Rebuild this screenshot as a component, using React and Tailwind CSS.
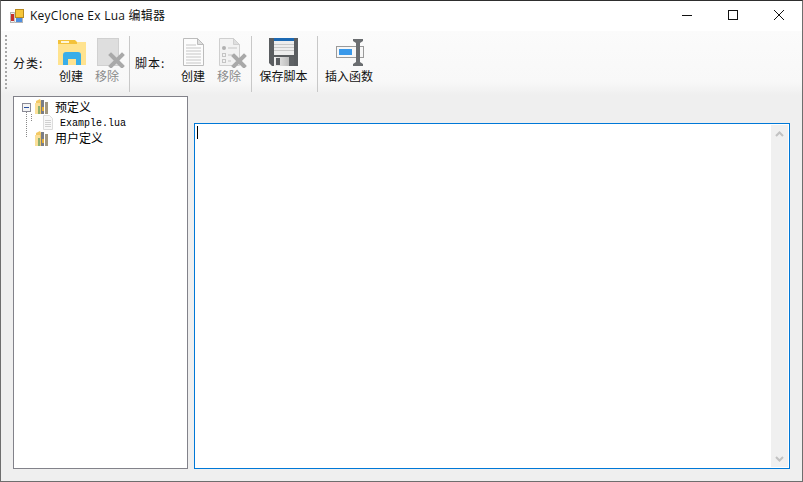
const cjk = "font-['Noto_Sans_CJK_SC','Noto_Sans',sans-serif]";

function AppIcon() {
  return (
    <svg width="14" height="14" viewBox="0 0 14 14">
      <rect x="0.5" y="3.5" width="12" height="10" fill="#f0f0f0" stroke="#b5b5b5" />
      <path d="M4.5 3v11M0 6.5h5" stroke="#c4c4c4" />
      <rect x="1" y="5" width="3" height="7" fill="#c62f2a" />
      <rect x="5.5" y="0.5" width="8" height="8" fill="#f6c63a" stroke="#b98a1e" />
      <rect x="6" y="9" width="6" height="4" fill="#4f8fe0" />
    </svg>
  );
}

function FolderBlue() {
  return (
    <svg width="28" height="25" viewBox="0 0 28 25" className="mt-[2px]">
      <path d="M0 2h28v23H0z" fill="#ffe38f" />
      <path d="M0 0h17l2 2v2H0z" fill="#f3c23a" />
      <rect x="3" y="1" width="8" height="2" fill="#fdf6d8" />
      <path d="M5 25V15q0-3 3-3h12q3 0 3 3v10h-5v-6h-8v6z" fill="#39aee9" />
    </svg>
  );
}

function GreyX({ x = 0, y = 0, size = 15 }) {
  return (
    <path
      transform={`translate(${x} ${y})`}
      d={`M2 2L${size - 2} ${size - 2}M${size - 2} 2L2 ${size - 2}`}
      stroke="#a9a9a9"
      strokeWidth="4"
      strokeLinecap="square"
      fill="none"
    />
  );
}

function RemoveCategory() {
  return (
    <svg width="28" height="30" viewBox="0 0 28 30">
      <rect x="0.5" y="0.5" width="21" height="27" fill="#dedede" stroke="#d0d0d0" />
      <GreyX x="12" y="15" />
    </svg>
  );
}

function DocLines() {
  return (
    <svg width="21" height="28" viewBox="0 0 21 28">
      <path d="M0.5 0.5h14l6 6v21H0.5z" fill="#fcfcfc" stroke="#bcbcbc" />
      <path d="M14.5 0.5v6h6z" fill="#dedede" stroke="#bcbcbc" />
      <path d="M3 7h10M3 10h15M3 13h15M3 16h15M3 19h15M3 22h15M3 25h15" stroke="#c6c6c6" />
    </svg>
  );
}

function DocRemove() {
  return (
    <svg width="28" height="30" viewBox="0 0 28 30">
      <path d="M0.5 0.5h14l6 6v21H0.5z" fill="#f2f2f2" stroke="#cfcfcf" />
      <path d="M14.5 0.5v6h6z" fill="#dedede" stroke="#cfcfcf" />
      <circle cx="5" cy="10" r="2" fill="#b0b0b0" />
      <rect x="3.5" y="15.5" width="3" height="3" fill="none" stroke="#c4c4c4" />
      <rect x="3.5" y="21.5" width="3" height="3" fill="none" stroke="#c4c4c4" />
      <path d="M9 10h9M9 17h6M9 23h3" stroke="#c4c4c4" />
      <GreyX x="13" y="16" size="14" />
    </svg>
  );
}

function Floppy() {
  return (
    <svg width="30" height="28" viewBox="0 0 30 28">
      <defs>
        <linearGradient id="disk" x1="0" x2="1" y1="0" y2="0">
          <stop offset="0" stopColor="#f2f2f2" />
          <stop offset="1" stopColor="#a9a9a9" />
        </linearGradient>
      </defs>
      <path d="M0 0h29v28H3l-3-3z" fill="#5a5d60" />
      <rect x="5" y="0" width="20" height="3" fill="#1c69b3" />
      <rect x="5" y="3" width="20" height="14" fill="#ededed" />
      <path d="M5 6.500h20M5 9.500h20M5 12.500h20" stroke="#c8c8c8" />
      <rect x="5" y="19" width="20" height="9" fill="url(#disk)" />
      <rect x="7" y="20" width="4" height="7" fill="#5a5d60" />
      <rect x="20" y="19" width="5" height="9" fill="#5f6265" />
    </svg>
  );
}

function InsertField() {
  return (
    <svg width="29" height="27" viewBox="0 0 29 27">
      <rect x="0.5" y="7.500" width="27" height="11" fill="#f7f7f7" stroke="#9a9a9a" />
      <rect x="3" y="10" width="13" height="6" fill="#3a99ea" />
      <path d="M17 0h10v2l-3 2v19l3 2v2H17v-2l3-2V4l-3-2z" fill="#6a6d70" />
    </svg>
  );
}

function TreeFolder() {
  return (
    <svg width="13" height="15" viewBox="0 0 13 15">
      <path d="M1 2l4-2 1 2v13H1z" fill="#f3c964" />
      <path d="M0 4h5v11H0z" fill="#fbdf98" />
      <rect x="3" y="7" width="2" height="8" fill="#8fb070" />
      <rect x="6" y="1" width="3" height="14" fill="#7a7d86" />
      <rect x="7" y="8" width="2" height="4" fill="#e6b13a" />
      <rect x="10" y="3" width="3" height="12" fill="#a2977f" />
    </svg>
  );
}

function SmallDoc() {
  return (
    <svg width="10" height="15" viewBox="0 0 10 15">
      <path d="M0.5 0.500h6l3 3v11h-9z" fill="#f8f8f8" stroke="#dcdcdc" />
      <path d="M2 5.500h6M2 7.500h6M2 9.500h6M2 11.500h6" stroke="#d0d0d0" />
    </svg>
  );
}

function ToolButton({ icon, label, disabled, width, iconClass = "" }) {
  return (
    <div className={`flex flex-col items-center ${width}`}>
      <div className={`h-[30px] flex items-start justify-center ${iconClass}`}>{icon}</div>
      <span className={`text-xs leading-[16px] ${disabled ? "text-[#8a8a8a]" : "text-[#111]"}`}>{label}</span>
    </div>
  );
}

function Sep() {
  return <div className="w-px h-[56px] -mt-[2px] bg-[#c8c8c8]" />;
}

export default function App() {
  return (
    <div className={`w-[803px] h-[482px] flex flex-col overflow-hidden bg-[#efefef] border border-[#6e6e6e] border-t-[#2e2e2e] ${cjk}`}>
      {/* title bar */}
      <div className="h-[30px] shrink-0 bg-white flex items-center pl-[9px]">
        <AppIcon />
        <span className="ml-[6px] text-xs text-[#111] tracking-[0.25px] font-['Open_Sans','Noto_Sans_CJK_SC',sans-serif]">KeyClone Ex Lua 编辑器</span>
        <div className="ml-auto flex pb-[2px]">
          <div className="w-[46px] flex justify-center">
            <svg width="10" height="10" viewBox="0 0 10 10"><path d="M0 5.500h10" stroke="#111" /></svg>
          </div>
          <div className="w-[46px] flex justify-center">
            <svg width="10" height="10" viewBox="0 0 10 10"><rect x="0.5" y="0.5" width="9" height="9" fill="none" stroke="#111" /></svg>
          </div>
          <div className="w-[46px] flex justify-center">
            <svg width="10" height="10" viewBox="0 0 10 10"><path d="M0 0L10 10M10 0L0 10" stroke="#111" /></svg>
          </div>
        </div>
      </div>

      {/* toolbar */}
      <div className="h-[64px] shrink-0 flex items-start pt-[7px] bg-gradient-to-b from-[#fbfbfb] via-[#f8f8f8] via-80% to-[#efefef] pl-[4px]">
        <div className="h-[54px] -mt-[3px] w-[2px] border-l-2 border-dotted border-[#a8a8a8] mr-[6px]" />
        <span className="text-xs leading-[16px] tracking-[1px] text-[#111] w-[39px] mt-[17px]">分类:</span>
        <ToolButton icon={<FolderBlue />} label="创建" width="w-[38px]" iconClass="pl-[2px]" />
        <ToolButton icon={<RemoveCategory />} label="移除" disabled width="w-[34px]" iconClass="pl-[8px]" />
        <div className="w-[5px]" />
        <Sep />
        <span className="text-xs leading-[16px] tracking-[1px] text-[#111] w-[39px] pl-[5px] mt-[17px]">脚本:</span>
        <div className="w-[6px]" />
        <ToolButton icon={<DocLines />} label="创建" width="w-[36px]" />
        <ToolButton icon={<DocRemove />} label="移除" disabled width="w-[36px]" iconClass="pl-[8px]" />
        <div className="w-[4px]" />
        <Sep />
        <ToolButton icon={<Floppy />} label="保存脚本" width="w-[63px]" iconClass="pl-px" />
        <div className="w-[2px]" />
        <Sep />
        <div className="w-[6px]" />
        <ToolButton icon={<InsertField />} label="插入函数" width="w-[50px]" iconClass="pl-[3px] pt-px" />
      </div>

      {/* body */}
      <div className="flex-1 flex items-end px-[12px] pb-[12px] gap-[6px]">
        <div className="w-[175px] h-[373px] shrink-0 bg-white border border-[#82828a] pl-[8px] pt-px relative">
          <div className="flex items-center h-[17px]">
            <div className="w-[9px] h-[9px] mt-px border border-[#8a8a96] bg-[#f4f4f4] flex items-center justify-center">
              <div className="w-[5px] h-px bg-[#2a4fa0]" />
            </div>
            <div className="w-[4px]" />
            <TreeFolder />
            <span className="ml-[7px] text-xs text-black">预定义</span>
          </div>
          <div className="flex items-center h-[15px] pl-[21px]">
            <SmallDoc />
            <span className="ml-[7px] mt-[2px] text-[10px] text-black font-['Liberation_Mono',monospace]">Example.lua</span>
          </div>
          <div className="flex items-center h-[16px] pl-[13px]">
            <TreeFolder />
            <span className="ml-[7px] text-xs text-black">用户定义</span>
          </div>
          {/* tree guide lines */}
          <div className="absolute left-[12px] top-[15px] h-[25px] border-l border-dotted border-[#888]" />
          <div className="absolute left-[17px] top-[17px] h-[7px] border-l border-dotted border-[#888]" />
        </div>
        <div className="flex-1 h-[346px] bg-white border border-[#0078d7] flex">
          <div className="flex-1 pl-[2px] pt-[2px]">
            <div className="w-px h-[13px] bg-black" />
          </div>
          <div className="w-[17px] my-px mr-px bg-[#f0f0f0] flex flex-col justify-between items-center pt-[6px] pb-[5px]">
            <svg width="9" height="6" viewBox="0 0 9 6"><path d="M1 5l3.500-3.500L8 5" stroke="#c2c2c2" strokeWidth="2" fill="none" /></svg>
            <svg width="9" height="6" viewBox="0 0 9 6"><path d="M1 1l3.500 3.500L8 1" stroke="#c2c2c2" strokeWidth="2" fill="none" /></svg>
          </div>
        </div>
      </div>
    </div>
  );
}
